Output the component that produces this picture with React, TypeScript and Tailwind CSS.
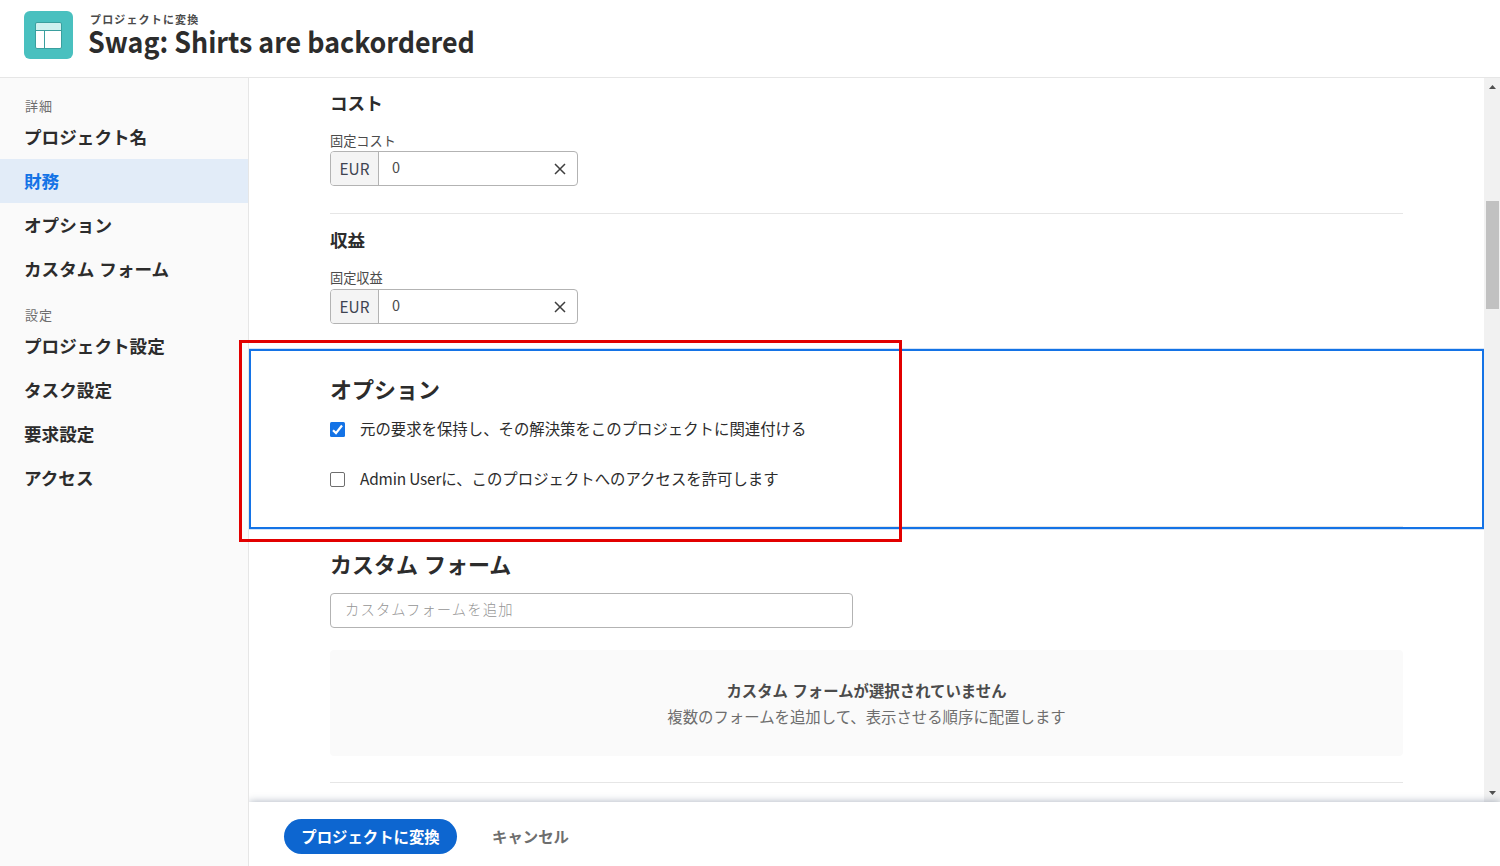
import React from "react";

type NavItem = { label: string; active?: boolean };

const detailItems: NavItem[] = [
  { label: "プロジェクト名" },
  { label: "財務", active: true },
  { label: "オプション" },
  { label: "カスタム フォーム" },
];

const settingItems: NavItem[] = [
  { label: "プロジェクト設定" },
  { label: "タスク設定" },
  { label: "要求設定" },
  { label: "アクセス" },
];

function ProjectIcon() {
  return (
    <div className="flex h-12 w-[49px] shrink-0 items-center justify-center rounded-[6px] bg-[#49c0bf]">
      <svg width="27" height="27" viewBox="0 0 27 27" className="block">
        <rect x="0.5" y="0.5" width="26" height="26" rx="1.5" fill="#ffffff" />
        <path d="M1 8V1h25v7z" fill="#cff1ef" />
        <rect x="0.5" y="0.5" width="26" height="26" rx="1.5" fill="none" stroke="#3a9f9e" />
        <path d="M1 8.5h25M9.5 9v17" stroke="#3a9f9e" fill="none" />
      </svg>
    </div>
  );
}

function Header() {
  return (
    <header className="flex h-[78px] shrink-0 border-b border-[#e6e6e6] pl-6 pt-[11px]">
      <ProjectIcon />
      <div className="flex flex-col pl-[15px]">
        <span className="h-[15px] pl-[2px] text-[11px] leading-[16px] font-bold tracking-[1.15px] text-[#4b4b4b]">
          プロジェクトに変換
        </span>
        <h1 className="origin-left scale-x-[0.925] text-[29px] leading-[28px] font-bold whitespace-nowrap text-[#2c2c2c]">
          Swag: Shirts are backordered
        </h1>
      </div>
    </header>
  );
}

function NavGroup({ caption, items }: { caption: string; items: NavItem[] }) {
  return (
    <section>
      <h2 className="h-[17px] pl-[25px] text-[13px] leading-[15px] font-normal tracking-[1px] text-[#6e6e6e]">
        {caption}
      </h2>
      <ul>
        {items.map((item) => (
          <li
            key={item.label}
            className={
              item.active
                ? "h-11 bg-[#e2ecf8] pl-6 text-[17.6px] leading-11 font-bold text-[#1473e6]"
                : "h-11 pl-6 text-[17.6px] leading-11 font-bold text-[#2c2c2c] [word-spacing:1px]"
            }
          >
            {item.label}
          </li>
        ))}
      </ul>
    </section>
  );
}

function Sidebar() {
  return (
    <nav className="flex w-[249px] shrink-0 flex-col gap-4 border-r border-[#e6e6e6] bg-[#fafafa] pt-5">
      <NavGroup caption="詳細" items={detailItems} />
      <NavGroup caption="設定" items={settingItems} />
    </nav>
  );
}

function CurrencyField({ label }: { label: string }) {
  return (
    <div>
      <div className="text-[13.2px] leading-[17px] text-[#4b4b4b]">{label}</div>
      <div className="flex h-[35px] w-[248px] items-center overflow-hidden rounded-[4px] border border-[#b3b3b3] bg-white">
        <span className="flex h-full w-12 items-center justify-center border-r border-[#b3b3b3] bg-[#f4f4f4] text-[15.4px] text-[#3f4451]">
          EUR
        </span>
        <span className="flex-1 pb-[3px] pl-[13px] text-[14.5px] leading-5 text-[#4b4b4b]">0</span>
        <svg width="12" height="12" viewBox="0 0 12 12" className="mr-[11px] block">
          <path d="M1 1l10 10M11 1L1 11" stroke="#3e3e3e" strokeWidth="1.5" fill="none" />
        </svg>
      </div>
    </div>
  );
}

function Checkbox({ checked }: { checked?: boolean }) {
  return (
    <svg width="15" height="15" viewBox="0 0 15 15" className="block shrink-0">
      {checked ? (
        <>
          <rect width="15" height="15" rx="1.5" fill="#1473e6" />
          <path d="M3 8.2l3 2.9 6-7.6" stroke="#ffffff" strokeWidth="2.2" fill="none" />
        </>
      ) : (
        <rect x="0.5" y="0.5" width="14" height="14" rx="1.5" fill="#ffffff" stroke="#6e6e6e" />
      )}
    </svg>
  );
}

function Scrollbar() {
  return (
    <div className="flex w-4 shrink-0 flex-col items-center bg-[#f1f1f1]">
      <svg width="16" height="17" viewBox="0 0 16 17" className="block">
        <path d="M5 11h7L8.5 7z" fill="#505050" />
      </svg>
      <div className="mt-[106px] ml-[1px] h-[108px] w-[13px] bg-[#c1c1c1]" />
      <svg width="16" height="17" viewBox="0 0 16 17" className="mt-auto block">
        <path d="M5 6h7l-3.5 4z" fill="#505050" />
      </svg>
    </div>
  );
}

function Content() {
  return (
    <main className="min-w-0 flex-1">
      <section className="mx-[81px] h-[136px] border-b border-[#e6e6e6] pt-[11px]">
        <h3 className="mb-[15px] h-7 text-[17.6px] leading-7 font-bold text-[#2c2c2c]">コスト</h3>
        <div className="flex flex-col [&>div]:flex [&>div]:flex-col [&>div]:gap-[2px]">
          <CurrencyField label="固定コスト" />
        </div>
      </section>
      <section className="mx-[81px] h-[134px] pt-3">
        <h3 className="mb-[15px] h-7 text-[17.6px] leading-7 font-bold text-[#2c2c2c]">収益</h3>
        <div className="flex flex-col [&>div]:flex [&>div]:flex-col [&>div]:gap-[3px]">
          <CurrencyField label="固定収益" />
        </div>
      </section>
      <section className="flex h-[182px] flex-col border-y border-[#d3e3f8]">
        <div className="h-[180px] border-2 border-[#1473e6] px-[79px]">
          <div className="h-[176px] border-b border-[#e6e6e6] pt-[21px]">
            <h2 className="h-8 text-[22px] leading-8 font-bold text-[#2c2c2c]">オプション</h2>
            <label className="flex h-[50px] items-center gap-[15px] text-[15.4px] text-[#2c2c2c]">
              <Checkbox checked />
              元の要求を保持し、その解決策をこのプロジェクトに関連付ける
            </label>
            <label className="flex h-[50px] items-center gap-[15px] text-[15.4px] text-[#2c2c2c]">
              <Checkbox />
              <span>
                <span className="tracking-[-0.17px]">Admin User</span>
                に、このプロジェクトへのアクセスを許可します
              </span>
            </label>
          </div>
        </div>
      </section>
      <section className="mx-[81px] h-[253px] border-b border-[#e6e6e6] pt-4">
        <h2 className="h-[47px] text-[22px] leading-[34px] font-bold text-[#2c2c2c] [word-spacing:1px]">
          カスタム フォーム
        </h2>
        <div className="h-[35px] w-[523px] rounded-[4px] border border-[#b3b3b3] pl-[14px] text-[14.3px] leading-[29px] font-light tracking-[1.15px] text-[#959595]">
          カスタムフォームを追加
        </div>
        <div className="mt-[22px] flex h-[106px] flex-col items-center justify-center rounded-[4px] bg-[#fafafa] text-[15.4px] leading-[26px]">
          <strong className="font-bold text-[#4b4b4b] [word-spacing:1px]">
            カスタム フォームが選択されていません
          </strong>
          <span className="text-[#6e6e6e]">複数のフォームを追加して、表示させる順序に配置します</span>
        </div>
      </section>
    </main>
  );
}

function Footer() {
  return (
    <footer className="relative flex h-16 shrink-0 items-center bg-white pb-[11px] pl-[35px] pt-4 text-[15.4px] font-bold shadow-[0_0_8px_rgba(40,60,90,0.4)]">
      <button className="flex h-[35px] w-[173px] items-center justify-center rounded-full bg-[#0d66d0] text-white">
        プロジェクトに変換
      </button>
      <button className="ml-[35px] text-[#6e6e6e]">キャンセル</button>
    </footer>
  );
}

export default function App() {
  return (
    <div className="relative flex h-[866px] w-[1500px] flex-col overflow-hidden bg-white font-['Noto_Sans_CJK_JP',sans-serif]">
      <Header />
      <div className="flex min-h-0 flex-1">
        <Sidebar />
        <div className="flex min-w-0 flex-1 flex-col overflow-hidden">
          <div className="flex h-[724px] shrink-0 overflow-hidden">
            <Content />
            <Scrollbar />
          </div>
          <Footer />
        </div>
      </div>
      {/* Callout frame around the options section */}
      <div className="pointer-events-none absolute top-[340px] left-[239px] h-[202px] w-[663px] border-3 border-[#e20000]" />
    </div>
  );
}
